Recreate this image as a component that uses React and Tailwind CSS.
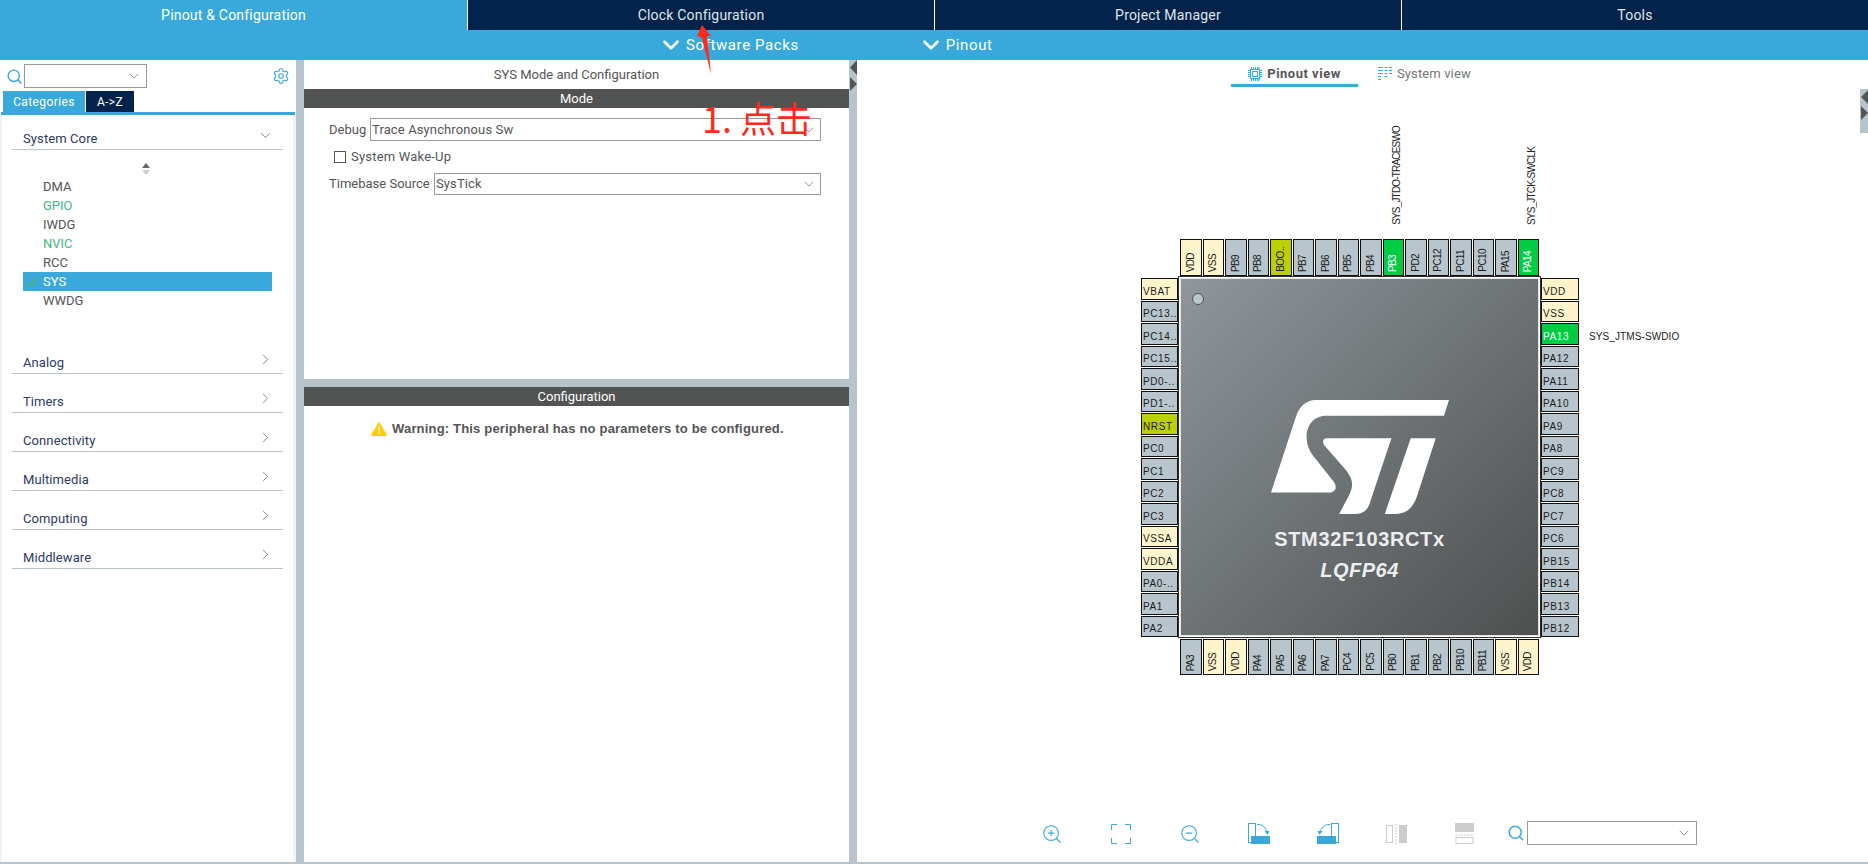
import React from 'react';
import { ChevronDown, ChevronRight, Settings, ZoomIn, ZoomOut, Search } from 'lucide-react';

const roboto = 'font-["Roboto",sans-serif]';
const arial = 'font-["Liberation_Sans",Arial,sans-serif]';

const pinFill = {
  n: 'bg-[#b8c5cc] text-[#1c1c1c]',
  p: 'bg-[#fff5cc] text-[#1c1c1c]',
  r: 'bg-[#bccf00] text-[#1c1c1c]',
  a: 'bg-[#00cc44] text-white',
};

const topPins = [['VDD', 'p'], ['VSS', 'p'], ['PB9', 'n'], ['PB8', 'n'], ['BOO..', 'r'], ['PB7', 'n'], ['PB6', 'n'], ['PB5', 'n'], ['PB4', 'n'], ['PB3', 'a'], ['PD2', 'n'], ['PC12', 'n'], ['PC11', 'n'], ['PC10', 'n'], ['PA15', 'n'], ['PA14', 'a']];
const bottomPins = [['PA3', 'n'], ['VSS', 'p'], ['VDD', 'p'], ['PA4', 'n'], ['PA5', 'n'], ['PA6', 'n'], ['PA7', 'n'], ['PC4', 'n'], ['PC5', 'n'], ['PB0', 'n'], ['PB1', 'n'], ['PB2', 'n'], ['PB10', 'n'], ['PB11', 'n'], ['VSS', 'p'], ['VDD', 'p']];
const leftPins = [['VBAT', 'p'], ['PC13..', 'n'], ['PC14..', 'n'], ['PC15..', 'n'], ['PD0-..', 'n'], ['PD1-..', 'n'], ['NRST', 'r'], ['PC0', 'n'], ['PC1', 'n'], ['PC2', 'n'], ['PC3', 'n'], ['VSSA', 'p'], ['VDDA', 'p'], ['PA0-..', 'n'], ['PA1', 'n'], ['PA2', 'n']];
const rightPins = [['VDD', 'p'], ['VSS', 'p'], ['PA13', 'a'], ['PA12', 'n'], ['PA11', 'n'], ['PA10', 'n'], ['PA9', 'n'], ['PA8', 'n'], ['PC9', 'n'], ['PC8', 'n'], ['PC7', 'n'], ['PC6', 'n'], ['PB15', 'n'], ['PB14', 'n'], ['PB13', 'n'], ['PB12', 'n']];

const VPin = ({ name, type }) => (
  <div className={`flex-1 min-w-0 border border-[#111] flex justify-center items-end pb-[3px] ${pinFill[type]}`}>
    <span className={`[writing-mode:vertical-rl] rotate-180 text-[10px] leading-none tracking-[-0.6px] ${arial}`}>{name}</span>
  </div>
);

const HPin = ({ name, type }) => (
  <div className={`flex-1 min-h-0 border border-[#111] flex items-end pl-[1px] pb-[2px] ${pinFill[type]}`}>
    <span className={`text-[10px] leading-none tracking-[0.6px] whitespace-nowrap ${arial}`}>{name}</span>
  </div>
);

const StLogo = () => (
  <svg viewBox="90 60 535 342" width="178" height="114" fill="#fff">
    <path d="M625 60 L610 107 L255 107 C220 107 197 135 197 170 C197 195 205 215 225 238 L278 305 C290 320 285 338 265 338 L90 338 L165 110 C175 80 195 60 225 60 Z" />
    <path d="M258 175 L452 175 L385 375 C378 392 365 402 345 402 L295 402 L325 345 C340 315 335 295 315 270 L252 198 C243 187 245 175 258 175 Z" />
    <path d="M510 175 L585 175 L530 345 C518 385 495 402 465 402 L432 402 Z" />
  </svg>
);

const Chip = () => (
  <div className="grid grid-cols-[37px_363px_38px] grid-rows-[37px_362px_37px] w-[438px]">
    <div />
    <div className="flex gap-[1px] px-[2px] relative">
      {topPins.map(([n, t], i) => <VPin key={i} name={n} type={t} />)}
      <span className={`absolute left-[214px] bottom-[51px] [writing-mode:vertical-rl] rotate-180 text-[10px] leading-none tracking-[-0.82px] text-[#222] whitespace-nowrap ${arial}`}>SYS_JTDO-TRACESWO</span>
      <span className={`absolute left-[349px] bottom-[51px] [writing-mode:vertical-rl] rotate-180 text-[10px] leading-none tracking-[-0.82px] text-[#222] whitespace-nowrap ${arial}`}>SYS_JTCK-SWCLK</span>
    </div>
    <div />
    <div className="flex flex-col gap-[1px] pt-[2px] pb-[1px]">
      {leftPins.map(([n, t], i) => <HPin key={i} name={n} type={t} />)}
    </div>
    <div className="relative border border-[#2f2f2f] bg-white p-[1px]">
      <div className="relative h-full border border-[#e2e5e6] bg-linear-to-br from-[#8f979c] to-[#4e5050] flex flex-col items-center pt-[121px]">
        <span className="absolute left-[11px] top-[14px] w-[12px] h-[12px] rounded-full bg-[#b8c5cc] border border-[#555]" />
        <StLogo />
        <div className={`mt-[14px] text-[20px] leading-[23px] font-bold tracking-[0.62px] text-[#eceeef] ${arial}`}>STM32F103RCTx</div>
        <div className={`mt-[8px] text-[20px] leading-[23px] font-bold italic tracking-[0.5px] text-[#eceeef] ${arial}`}>LQFP64</div>
      </div>
    </div>
    <div className="flex flex-col gap-[1px] pt-[2px] pb-[1px] relative">
      {rightPins.map(([n, t], i) => <HPin key={i} name={n} type={t} />)}
      <span className={`absolute left-[48px] top-[56px] text-[10px] leading-none tracking-[0.1px] whitespace-nowrap text-[#222] ${arial}`}>SYS_JTMS-SWDIO</span>
    </div>
    <div />
    <div className="flex gap-[1px] px-[2px] pt-[1px]">
      {bottomPins.map(([n, t], i) => <VPin key={i} name={n} type={t} />)}
    </div>
    <div />
  </div>
);

const Category = ({ label }) => (
  <div className="h-[39px] ml-[10px] w-[271px] border-b border-[#b8c4cb] flex items-end justify-between pb-[1px] pl-[11px] pr-[9px]">
    <span className="text-[13px] leading-[18px] tracking-[0.1px] text-[#2c3a66]">{label}</span>
    <ChevronRight size={17} strokeWidth={1.1} className="text-[#666] mb-[4px]" />
  </div>
);

const Select = ({ value, className }) => (
  <div className={`border-[1.5px] border-[#999] bg-white flex items-center justify-between pl-[1px] pr-[3px] ${className}`}>
    <span className="text-[13px] tracking-[0.12px] text-[#555] whitespace-nowrap">{value}</span>
    <ChevronDown size={16} strokeWidth={1} className="text-[#666]" />
  </div>
);

const items = [
  ['DMA', 'text-[#555]'],
  ['GPIO', 'text-[#45b583]'],
  ['IWDG', 'text-[#555]'],
  ['NVIC', 'text-[#45b583]'],
  ['RCC', 'text-[#555]'],
  ['SYS', 'text-white bg-[#39a9dc]'],
  ['WWDG', 'text-[#555]'],
];

const Sidebar = () => (
  <div className="w-[296px] bg-white flex flex-col">
    <div className="h-[31px] flex items-center pl-[6px] pr-[6px] pt-[1px]">
      <Search size={17} strokeWidth={2} className="text-[#39a9dc] shrink-0" />
      <div className="ml-[1px] w-[123px] h-[24px] border-[1.5px] border-[#999] flex items-center justify-end pr-[4px]">
        <ChevronDown size={16} strokeWidth={1} className="text-[#666]" />
      </div>
      <Settings size={18} strokeWidth={1.5} className="text-[#39a9dc] ml-auto" />
    </div>
    <div className="flex h-[21px] pl-[3px] gap-[1px]">
      <div className="w-[82px] bg-[#39a9dc] text-white text-[12px] tracking-[0.4px] flex items-center justify-center">Categories</div>
      <div className="w-[48px] bg-[#03234b] text-white text-[12px] tracking-[0.4px] flex items-center justify-center">A-&gt;Z</div>
    </div>
    <div className="h-[3px] bg-[#39a9dc] ml-[1px] mr-[1px]" />
    <div className="flex-1 border-l-2 border-r-[3px] border-[#f0f2f3]">
      <div className="h-[35px] ml-[10px] w-[271px] border-b border-[#b8c4cb] flex items-end justify-between pb-[1px] pl-[11px] pr-[9px]">
        <span className="text-[13px] leading-[18px] tracking-[0.1px] text-[#2c3a66]">System Core</span>
        <ChevronDown size={17} strokeWidth={1.1} className="text-[#666] mb-[4px]" />
      </div>
      <div className="h-[185px] pt-[13px]">
        <svg width="8" height="12" viewBox="0 0 8 12" className="ml-[140px]">
          <path d="M4 0 L8 5 L0 5 Z" fill="#666" />
          <path d="M4 12 L8 7 L0 7 Z" fill="#ccc" />
        </svg>
        <div className="mt-[2px] ml-[21px] w-[249px]">
          {items.map(([name, cls]) => (
            <div key={name} className={`h-[19px] flex items-center text-[13px] ${cls}`}>
              <span className="w-[20px] flex justify-center">
                {name === 'SYS' && (
                  <svg width="12" height="10" viewBox="0 0 12 10"><path d="M1 5 L4.5 8.5 L11 1" fill="none" stroke="#45b583" strokeWidth="2" /></svg>
                )}
              </span>
              {name}
            </div>
          ))}
        </div>
      </div>
      {['Analog', 'Timers', 'Connectivity', 'Multimedia', 'Computing', 'Middleware'].map((c) => <Category key={c} label={c} />)}
    </div>
  </div>
);

const ModePanel = () => (
  <div className="h-[319px] bg-white flex flex-col">
    <div className="h-[29px] flex items-center justify-center text-[13px] text-[#555]">SYS Mode and Configuration</div>
    <div className="h-[19px] bg-[#525453] text-white text-[13px] flex items-center justify-center">Mode</div>
    <div className="pl-[25px] pt-[10px]">
      <div className="flex items-center h-[23px]">
        <span className="w-[41px] text-[13px] text-[#555]">Debug</span>
        <Select value="Trace Asynchronous Sw" className="w-[451px] h-[23px]" />
      </div>
      <div className="flex items-center h-[32px] pl-[5px]">
        <span className="w-[12px] h-[12px] border border-[#555] mr-[5px]" />
        <span className="text-[13px] tracking-[0.2px] text-[#555]">System Wake-Up</span>
      </div>
      <div className="flex items-center h-[22px]">
        <span className="w-[105px] text-[13px] text-[#555]">Timebase Source</span>
        <Select value="SysTick" className="w-[387px] h-[22px]" />
      </div>
    </div>
  </div>
);

const ConfigPanel = () => (
  <div className="flex-1 bg-white flex flex-col">
    <div className="h-[19px] bg-[#525453] text-white text-[13px] flex items-center justify-center">Configuration</div>
    <div className={`pt-[13px] pl-[67px] flex items-center gap-[5px] text-[13px] font-bold tracking-[0.18px] text-[#555] ${arial}`}>
      <svg width="16" height="14" viewBox="0 0 16 14">
        <path d="M8 0.5 L15.7 13.5 L0.3 13.5 Z" fill="#ffcc00" stroke="#ffcc00" strokeLinejoin="round" />
        <path d="M7.2 4.5 H8.8 L8.5 9.5 H7.5 Z M7.2 10.5 H8.8 V12 H7.2 Z" fill="#fff" />
      </svg>
      Warning: This peripheral has no parameters to be configured.
    </div>
  </div>
);

const ChipIcon = () => (
  <svg width="14" height="14" viewBox="0 0 14 14" fill="none" stroke="#39a9dc">
    <rect x="2.5" y="2.5" width="9" height="9" />
    <rect x="4.5" y="4.5" width="5" height="5" />
    <path d="M3.5 0V2M5.5 0V2M7.5 0V2M9.5 0V2M11 0V2M3.5 12V14M5.5 12V14M7.5 12V14M9.5 12V14M11 12V14M0 3.5H2M0 5.5H2M0 7.5H2M0 9.5H2M12 3.5H14M12 5.5H14M12 7.5H14M12 9.5H14" />
  </svg>
);

const SystemIcon = () => (
  <svg width="14" height="14" viewBox="0 0 14 14" stroke="#39a9dc" fill="none">
    <path d="M0 .5H5M6.5 .5H9.5M11 .5H14M0 3.5H5M6.5 3.5H9.5M11 3.5H14M0 6.5H5M6.5 6.5H9.5M11 6.5H14M0 9.5H3M6.5 9.5H9.5M0 12.5H3" />
  </svg>
);

const RotateRight = ({ flip }) => (
  <svg width="22" height="21" viewBox="0 0 22 21" fill="none" stroke="#39a9dc" className={flip ? '-scale-x-100' : ''}>
    <rect x="0.5" y="0.5" width="7" height="19" />
    <rect x="3" y="13" width="19" height="8" fill="#39a9dc" stroke="none" />
    <path d="M9 1.5 C15 1 18 5 19 10" />
    <path d="M16.5 8 L19.5 12 L21.5 8 Z" fill="#39a9dc" stroke="none" />
  </svg>
);

const Toolbar = () => (
  <div className="h-[44px] flex items-start pl-[184px] text-[#39a9dc]">
    <ZoomIn size={22} strokeWidth={1.2} className="mt-[5px]" />
    <svg width="20" height="20" viewBox="0 0 20 20" fill="none" stroke="#39a9dc" className="ml-[48px] mt-[6px]">
      <path d="M6 .5H.5V6M14 .5H19.5V6M6 19.5H.5V14M14 19.5H19.5V14" />
    </svg>
    <ZoomOut size={22} strokeWidth={1.2} className="ml-[48px] mt-[5px]" />
    <span className="ml-[47px] mt-[5px]"><RotateRight /></span>
    <span className="ml-[47px] mt-[5px] flex"><RotateRight flip /></span>
    <svg width="21" height="20" viewBox="0 0 21 20" fill="none" stroke="#ccc" className="ml-[47px] mt-[6px]">
      <rect x="0.5" y="1.5" width="6" height="17" />
      <path d="M10 0V20" strokeDasharray="2 1" />
      <rect x="13" y="1" width="8" height="18" fill="#ccc" stroke="none" />
    </svg>
    <svg width="19" height="21" viewBox="0 0 19 21" fill="none" stroke="#ccc" className="ml-[48px] mt-[5px]">
      <rect x="0" y="0" width="19" height="9" fill="#ccc" stroke="none" />
      <path d="M0 12H19" strokeDasharray="2 1" />
      <rect x="1" y="14.5" width="17" height="6" />
    </svg>
    <Search size={18} strokeWidth={2} className="ml-[33px] mt-[6px]" />
    <div className="ml-[2px] mt-[3px] w-[170px] h-[24px] border-[1.5px] border-[#999] flex items-center justify-end pr-[4px]">
      <ChevronDown size={16} strokeWidth={1} className="text-[#666]" />
    </div>
  </div>
);

const PinoutPanel = () => (
  <div className="flex-1 bg-white flex flex-col relative">
    <div className="h-[27px] flex items-start pl-[374px]">
      <div className="w-[127px] h-[27px] border-b-[3px] border-[#39a9dc] flex items-center justify-center gap-[5px] pt-[3px] text-[13px] font-bold tracking-[0.5px] text-[#555]">
        <ChipIcon />
        Pinout view
      </div>
      <div className="ml-[20px] h-[27px] flex items-center gap-[5px] pt-[1px] text-[13px] tracking-[0.12px] text-[#777]">
        <SystemIcon />
        System view
      </div>
    </div>
    <div className="flex-1 pl-[284px] pt-[152px]">
      <Chip />
    </div>
    <Toolbar />
    <div className="absolute right-0 top-[29px] w-[8px] h-[44px] bg-[#b8c4cb] flex flex-col gap-[2px] pt-[1px]">
      <svg width="8" height="14" viewBox="0 0 8 14"><path d="M8 0V14L1 7Z" fill="#555" /></svg>
      <svg width="8" height="14" viewBox="0 0 8 14"><path d="M1 0V14L8 7Z" fill="#555" /></svg>
    </div>
  </div>
);

export default function App() {
  return (
    <div className={`relative w-screen h-screen overflow-hidden bg-white flex flex-col ${roboto}`}>
      <div className="h-[30px] flex text-[14px] tracking-[0.2px]">
        <div className="w-[467px] bg-[#39a9dc] text-white flex items-center justify-center">Pinout &amp; Configuration</div>
        <div className="w-[467px] bg-[#03234b] text-[#dfe5ea] border-l border-white flex items-center justify-center">Clock Configuration</div>
        <div className="w-[467px] bg-[#03234b] text-[#dfe5ea] border-l border-white flex items-center justify-center">Project Manager</div>
        <div className="flex-1 bg-[#03234b] text-[#dfe5ea] border-l border-white flex items-center justify-center">Tools</div>
      </div>
      <div className="h-[30px] bg-[#39a9dc] text-white text-[15px] tracking-[0.6px] flex items-center pl-[662px]">
        <ChevronDown size={26} strokeWidth={2.4} className="-mx-[4px]" />
        <span className="ml-[6px]">Software Packs</span>
        <span className="ml-[123px] flex items-center">
          <ChevronDown size={26} strokeWidth={2.4} className="-mx-[4px]" />
          <span className="ml-[6px]">Pinout</span>
        </span>
      </div>
      <div className="flex-1 min-h-0 flex bg-[#b8c4cb] pb-[2px]">
        <Sidebar />
        <div className="w-[8px]" />
        <div className="w-[545px] flex flex-col">
          <ModePanel />
          <div className="h-[8px]" />
          <ConfigPanel />
        </div>
        <div className="w-[8px] flex flex-col gap-[2px]">
          <svg width="8" height="15" viewBox="0 0 8 15"><path d="M8 0V15L1 7.5Z" fill="#555" /></svg>
          <svg width="8" height="14" viewBox="0 0 8 14"><path d="M1 0V14L8 7Z" fill="#555" /></svg>
        </div>
        <PinoutPanel />
      </div>
      {/* red annotation drawn on top of the screenshot */}
      <svg width="16" height="52" viewBox="0 0 16 52" className="absolute left-[696px] top-[24px]">
        <path d="M6 1 L15 12 L11 12 L15 50 L6 14 L1 12 Z" fill="#ff2a1a" />
      </svg>
      <div className='absolute left-[702px] top-[92px] text-[36px] leading-[50px] text-[#ff2a1a] whitespace-nowrap font-["Noto_Sans_CJK_SC",sans-serif]'>1. 点击</div>
    </div>
  );
}
